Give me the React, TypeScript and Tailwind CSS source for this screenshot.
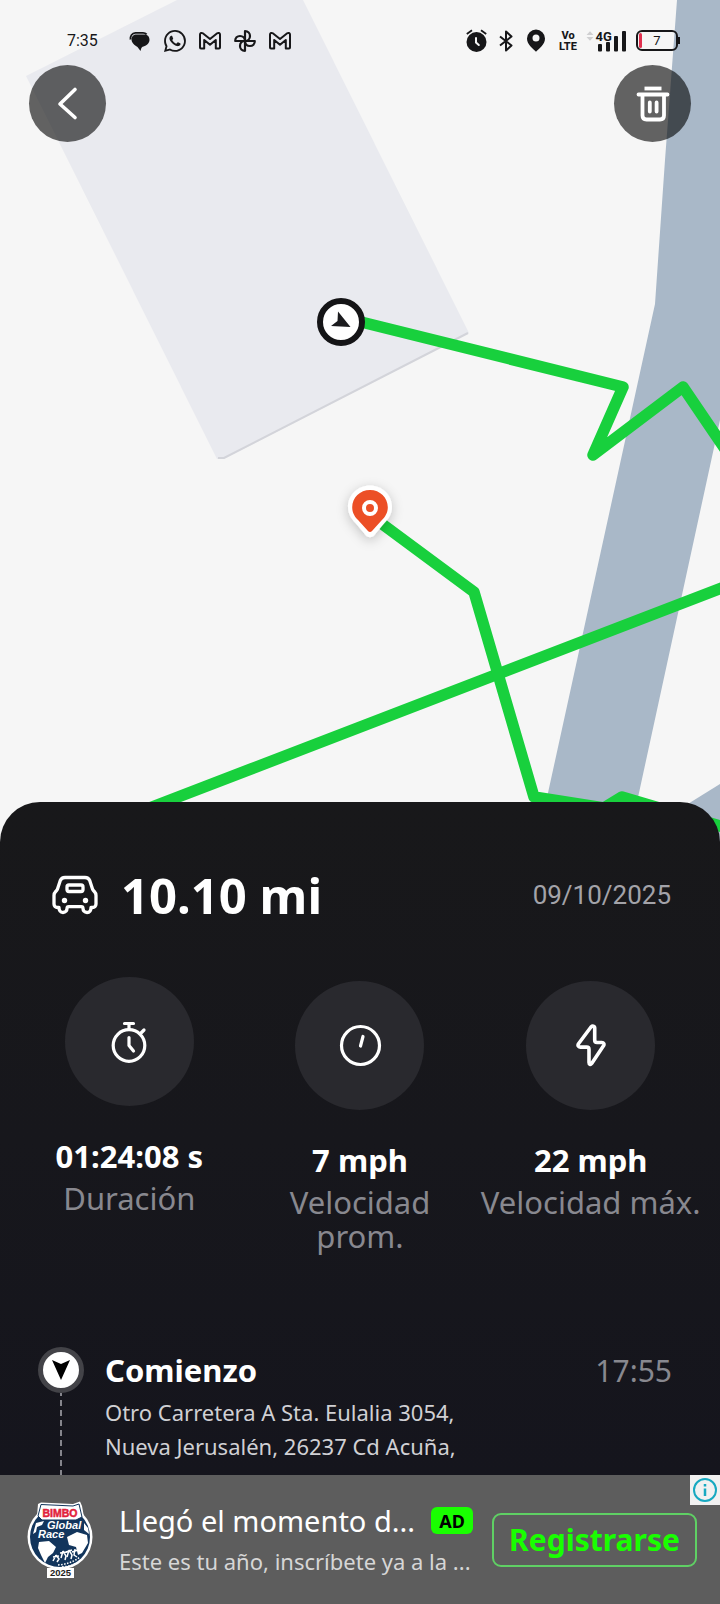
import React from "react";
import { BsWhatsapp } from "react-icons/bs";

function RouteMap() {
  return (
    <svg
      className="absolute inset-0 h-full w-full"
      viewBox="0 0 720 842"
      preserveAspectRatio="xMidYMin slice"
      role="img"
      aria-label="Mapa de la ruta"
    >
      <defs>
        <filter id="pin-shadow" x="-50%" y="-50%" width="200%" height="200%">
          <feDropShadow dx="0" dy="3" stdDeviation="6" floodColor="#000" floodOpacity="0.22" />
        </filter>
      </defs>
      <rect width="720" height="842" fill="#f6f6f6" />
      <path d="M26 76 177 0H303L469 333 224 459 217 459Z" fill="#e9eaef" />
      <path d="M468 333 224 458H218" fill="none" stroke="#d3d4da" strokeWidth="2" />
      <path d="M677 0 665 160 655 304 546 802 539 842H623L637 802 720 420V0Z" fill="#a9b8c8" />
      <path d="M691 802 720 784V842H640Z" fill="#a9b8c8" />
      <g fill="none" stroke="#18d03d" strokeWidth="11.500" strokeLinejoin="round" strokeLinecap="round">
        <path d="M341 317 623 387 593 455 683 387 740 471" />
        <path d="M740 581 100 827" />
        <path d="M370 515 474 592 534 797 604 808 622 797 730 829" />
      </g>
      <circle cx="341" cy="322" r="21" fill="#fff" stroke="#141416" strokeWidth="6" />
      <path d="M338 311.500 350.500 327 331 326 337.500 321Z" fill="#1b1b1e" />
      <g filter="url(#pin-shadow)">
        <path
          d="M370 485.500c-12.200 0-22 9.600-22 21.500 0 7 3.600 12 7.500 16l10.500 12.500c2 2.200 6 2.200 8 0L384.500 523c3.900-4 7.500-9 7.500-16 0-11.900-9.800-21.500-22-21.500Z"
          fill="#fff"
        />
        <path
          d="M370 490c-10 0-17.800 7.500-17.800 17.200 0 5.500 2.700 9.700 6.100 13.100l9.900 11c1 1.100 2.600 1.100 3.600 0l9.900-11c3.400-3.400 6.100-7.600 6.100-13.100 0-9.700-7.800-17.200-17.800-17.200Z"
          fill="#ec4f25"
        />
        <circle cx="370" cy="508" r="6" fill="none" stroke="#fff" strokeWidth="4" />
      </g>
    </svg>
  );
}

function BubbleIcon() {
  return (
    <svg viewBox="0 0 22 22" className="size-[22px]" aria-hidden="true">
      <path
        d="M7.500 4.500H16c2.500 0 4.500 2.300 4.500 5.300 0 3.200-2.500 6-6 6.600-1.300.3-2 1-2.300 2.200L11.500 21 8.500 17C5.500 15.500 2.500 12.500 2.500 9.500c0-3 2-5 5-5Z"
        fill="#171719"
      />
      <path d="M1.500 9.500C1 6 3 3 6.500 2.800H14c1.600 0 2.800.6 3.600 1.600" fill="none" stroke="#171719" strokeWidth="1.800" />
    </svg>
  );
}

function MailIcon() {
  return (
    <svg viewBox="0 0 22 22" className="size-[22px]" aria-hidden="true">
      <path
        d="M1 4.500c0-1.600 1.700-2 2.800-1.200L11 9l7.200-5.700c1.100-.8 2.800-.4 2.800 1.200V17.500c0 .6-.4 1-1 1h-3.200V10L11 14.800 5.200 10v8.500H2c-.6 0-1-.4-1-1Z"
        fill="none"
        stroke="#171719"
        strokeWidth="2"
        strokeLinejoin="round"
      />
    </svg>
  );
}

function PinwheelIcon() {
  return (
    <svg viewBox="0 0 22 22" className="size-[22px]" aria-hidden="true">
      <g fill="none" stroke="#171719" strokeWidth="2.200" strokeLinejoin="round">
        <path d="M11 11V1.200C14 1.200 16 3.200 16 6S14 11 11 11Z" />
        <path d="M11 11h9.800c0 3-2 5-4.900 5S11 14 11 11Z" />
        <path d="M11 11v9.800c-3 0-5-2-5-4.900S8 11 11 11Z" />
        <path d="M11 11H1.200C1.200 8 3.200 6 6 6s5 2 5 5Z" />
      </g>
    </svg>
  );
}

function AlarmIcon() {
  return (
    <svg viewBox="0 0 21 23" className="h-[23px] w-[21px]" aria-hidden="true">
      <circle cx="10.500" cy="13" r="10" fill="#171719" />
      <path d="M10 9v4.500l2.800 2.500" fill="none" stroke="#f6f6f6" strokeWidth="2" strokeLinecap="round" />
      <path d="M.8 5 6 1.200M20.200 5 15 1.200" stroke="#171719" strokeWidth="1.800" />
    </svg>
  );
}

function BluetoothIcon() {
  return (
    <svg viewBox="0 0 14 22" className="h-[22px] w-[14px]" aria-hidden="true">
      <path
        d="M1 6.500 12.500 15.500 7 20.500V1.500L12.500 6.500 1 15.500"
        fill="none"
        stroke="#171719"
        strokeWidth="2"
        strokeLinejoin="round"
      />
    </svg>
  );
}

function PlaceIcon() {
  return (
    <svg viewBox="0 0 18 23" className="h-[23px] w-[18px]" aria-hidden="true">
      <path
        fillRule="evenodd"
        d="M9 .5a9 9 0 0 0-9 9C0 15.500 6 19.500 9 22.800 12 19.500 18 15.500 18 9.500a9 9 0 0 0-9-9Zm0 5a3.500 3.500 0 1 1 0 7 3.500 3.500 0 0 1 0-7Z"
        fill="#171719"
      />
    </svg>
  );
}

function SignalIcon() {
  return (
    <svg viewBox="0 0 42 22" className="h-[22px] w-[42px]" role="img" aria-label="Señal 4G">
      <path d="M.5 5 4 1.200 7.500 5ZM.5 7 4 10.800 7.500 7Z" fill="#cfcfd1" />
      <g fill="#171719">
        <rect x="12" y="14" width="4" height="7.500" rx="1" />
        <rect x="20" y="12" width="4" height="9.500" rx="1" />
        <rect x="28" y="6" width="4" height="15.500" rx="1" />
        <rect x="36" y="1" width="4" height="20.500" rx="1" />
        <text x="9.500" y="10.500" fontSize="13" fontWeight="700" fontFamily="Roboto, sans-serif">
          4G
        </text>
      </g>
    </svg>
  );
}

function StatusBar() {
  return (
    <div className="flex h-[52px] items-end justify-between pr-10 pl-[67px] font-[Roboto,sans-serif] text-[#171719]">
      <div className="flex items-center">
        <span className="w-[62px] text-[16px] leading-[22px]">7:35</span>
        <div className="flex items-center gap-[13px]">
          <BubbleIcon />
          <BsWhatsapp className="size-[22px]" aria-hidden="true" />
          <MailIcon />
          <PinwheelIcon />
          <MailIcon />
        </div>
      </div>
      <div className="flex items-center">
        <AlarmIcon />
        <span className="ml-3 flex">
          <BluetoothIcon />
        </span>
        <span className="ml-[14px] flex">
          <PlaceIcon />
        </span>
        <span className="ml-[13px] flex w-5 flex-col items-center text-[11px] leading-[11px] font-extrabold">
          <span>Vo</span>
          <span>LTE</span>
        </span>
        <span className="ml-2 flex">
          <SignalIcon />
        </span>
        <span className="ml-2 flex items-center">
          <span className="flex h-[21px] w-[42px] items-center rounded-md border-2 border-[#171719] pl-px">
            <span className="h-[15px] w-[3px] rounded-sm bg-[#e0304e]" />
            <span className="flex-1 pr-1 text-center text-[13px] leading-[15px]">7</span>
          </span>
          <span className="h-[7px] w-[2px] bg-[#171719]" />
        </span>
      </div>
    </div>
  );
}

function CarIcon() {
  return (
    <svg viewBox="0 0 46 40" className="h-10 w-[46px]" fill="none" stroke="#fff" strokeWidth="3.300" strokeLinejoin="round" aria-hidden="true">
      <path d="M13 2.500H33c2.500 0 4 1.200 4.800 3.200L40.500 14c.3 1 1 1.700 1.800 2.500 1.200 1.200 1.700 2.400 1.700 4V29c0 2-1.500 3.500-3.500 3.500H39c0 3-1.300 5-4 5s-4-2-4-4c0-1-.6-1.800-1.800-1.800H16.800C15.600 31.700 15 32.500 15 33.500c0 2-1.300 4-4 4s-4-2-4-5H5.500C3.500 32.500 2 31 2 29V20.500c0-1.600.5-2.800 1.700-4C4.500 15.700 5.200 15 5.500 14L8.200 5.700C9 3.700 10.500 2.500 13 2.500Z" />
      <rect x="15" y="10" width="16" height="6.500" rx="2" />
      <circle cx="12.500" cy="25.500" r="2.700" fill="#fff" stroke="none" />
      <circle cx="33.500" cy="25.500" r="2.700" fill="#fff" stroke="none" />
    </svg>
  );
}

function StopwatchIcon() {
  return (
    <svg viewBox="0 0 44 44" className="size-11" fill="none" stroke="#fff" strokeWidth="3.200" strokeLinecap="round" strokeLinejoin="round" aria-hidden="true">
      <circle cx="22" cy="25.500" r="15.800" />
      <path d="M17.500 3.500H26.500M22 4V9M34 13 37 10M22 17.500V25.500L26.500 31" />
    </svg>
  );
}

function GaugeIcon() {
  return (
    <svg viewBox="0 0 44 44" className="size-11" fill="none" stroke="#fff" strokeWidth="3.200" strokeLinecap="round" aria-hidden="true">
      <circle cx="22.500" cy="21.500" r="19" />
      <path d="M25 12.500 22.500 22" />
    </svg>
  );
}

function BoltIcon() {
  return (
    <svg viewBox="0 0 44 44" className="size-11" fill="none" stroke="#fff" strokeWidth="3.600" strokeLinejoin="round" aria-hidden="true">
      <path d="M22 3 9.500 19.800c-1 1.600-.3 3.300 1.700 3.300h6.500c1.500 0 2.300.8 2.300 2.200V38.500c0 2 1.500 2.500 2.700 1L34.500 21.800c1-1.600.3-3.300-1.700-3.300H28c-1.500 0-2.300-.8-2.300-2.200V4c0-2-2.200-2.500-3.700-1Z" />
    </svg>
  );
}

type StatProps = { icon: React.ReactNode; value: string; label: string; lowered?: boolean };

function Stat({ icon, value, label, lowered }: StatProps) {
  return (
    <div className={lowered ? "flex flex-col items-center pt-1" : "flex flex-col items-center"}>
      <div className="flex size-[129px] items-center justify-center rounded-full bg-[#29292e]">{icon}</div>
      <p className="mt-[29px] text-[31px] leading-[42px] font-bold text-white">{value}</p>
      <p className="mt-1 text-center text-[31px] leading-[34px] text-[#88888f]">{label}</p>
    </div>
  );
}

function RaceLogo() {
  return (
    <svg viewBox="0 0 66 78" className="h-[78px] w-[66px] shrink-0" role="img" aria-label="Bimbo Global Race 2025">
      <circle cx="33" cy="36" r="32.500" fill="#fff" />
      <path d="M11 3 14 1.500 46 3 53 .5 55 5 57 16 50 20H14L10 15Z" fill="#fff" />
      <circle cx="33" cy="36" r="30" fill="#12355c" />
      <path d="M14 3.500 46 5 52 3 55 16 49 19H15L11 15Z" fill="#fff" stroke="#12355c" strokeWidth="1" />
      <rect x="15" y="7" width="36" height="10" rx="2" fill="#fff" />
      <path d="M9 22 17 20 15 24 10 26 9 31 6 33Z" fill="#fff" />
      <path d="M12 41 22 40 29 46 26 52 21 56 18 62 14 54 11 47Z" fill="#fff" />
      <path d="M40 36 50 31 60 34 61 42 55 52 51 54 49 46 42 44Z" fill="#fff" />
      <path d="M57 22 61 27 62 33 57 29Z" fill="#fff" />
      <g stroke="#fff" strokeWidth="1.500" fill="none">
        <path d="M29 54 26 60M29 54 32 58 30 61M26 56 32 55" />
        <path d="M36 50 34 57M36 50 39 55 38 59M33 52 40 51" />
        <path d="M42 49 40 56M42 49 45 54 44 58M39 51 45 49" />
        <path d="M48 48 47 54 50 56M45 51 51 49" />
        <path d="M31 64Q44 63 53 56M35 66Q46 65 51 61" strokeDasharray="1.500 1.500" />
      </g>
      <rect x="20" y="67" width="27" height="10" fill="#fff" />
      <g fontFamily="'Liberation Sans', sans-serif" fontWeight="700">
        <text x="33" y="15.500" textAnchor="middle" fontSize="10.500" fill="#e21f3c" stroke="#e21f3c" strokeWidth=".5">
          BIMBO
        </text>
        <text x="20" y="28" fontSize="11" fontStyle="italic" fill="#fff">
          Global
        </text>
        <text x="11" y="37" fontSize="11" fontStyle="italic" fill="#fff">
          Race
        </text>
        <text x="33.500" y="75" textAnchor="middle" fontSize="9.500" fill="#222">
          2025
        </text>
      </g>
    </svg>
  );
}

export default function App() {
  return (
    <div className="flex min-h-screen flex-col bg-[#15151d] font-['Noto_Sans',sans-serif]">
      <header className="relative h-[842px]">
        <RouteMap />
        <div className="relative">
          <StatusBar />
          <div className="mt-[13px] flex justify-between px-[29px]">
            <button type="button" aria-label="Volver" className="flex size-[77px] items-center justify-center rounded-full bg-black/60">
              <svg viewBox="0 0 40 40" className="size-10" fill="none" stroke="#fff" strokeWidth="3.600" strokeLinecap="round" strokeLinejoin="round" aria-hidden="true">
                <path d="M27 5.500 12 20 27 33.500" />
              </svg>
            </button>
            <button type="button" aria-label="Eliminar" className="flex size-[77px] items-center justify-center rounded-full bg-black/60">
              <svg viewBox="0 0 40 40" className="size-10" fill="none" stroke="#fff" strokeWidth="3.800" strokeLinecap="round" strokeLinejoin="round" aria-hidden="true">
                <path d="M11.500 4.500H28.500" strokeLinecap="butt" />
                <path d="M5.500 10.500H34.500M9.500 10.500V31.500c0 2.500 1.500 4 4 4H27c2.500 0 4-1.500 4-4V10.500M16.800 18.500V27.500M23.600 18.500V27.500" />
              </svg>
            </button>
          </div>
        </div>
      </header>

      <main className="relative -mt-10 flex-1 rounded-t-[40px] bg-linear-to-b from-[#18181a] via-[#17171c] to-[#15151d] pt-[61px]">
        <div className="flex items-center justify-between pr-[49px] pl-[52px]">
          <div className="flex items-center gap-[23px]">
            <CarIcon />
            <h1 className="text-[49px] leading-[64px] font-bold text-white">10.10 mi</h1>
          </div>
          <time className="font-[Roboto,sans-serif] text-[26px] leading-[60px] text-[#a3a3a9]">09/10/2025</time>
        </div>

        <section className="mt-[50px] grid grid-cols-3 px-[14px]">
          <Stat icon={<StopwatchIcon />} value="01:24:08 s" label="Duración" />
          <Stat icon={<GaugeIcon />} value="7 mph" label="Velocidad prom." lowered />
          <Stat icon={<BoltIcon />} value="22 mph" label="Velocidad máx." lowered />
        </section>

        <section className="mt-[94px] flex pr-12 pl-[38px]">
          <div className="flex w-[46px] flex-col items-center">
            <div className="flex size-[46px] items-center justify-center rounded-full border-5 border-[#434348] bg-white">
              <svg viewBox="0 0 18 20" className="h-5 w-[18px]" aria-hidden="true">
                <path d="M0 0 9 4 18 0 9 20Z" fill="#000" />
              </svg>
            </div>
            <div className="w-[2px] flex-1 bg-[repeating-linear-gradient(to_bottom,#85858c_0px,#85858c_3px,transparent_3px,transparent_7px,#85858c_7px,#85858c_10px)]" />
          </div>
          <div className="flex-1 pt-[2px] pb-3 pl-[21px]">
            <div className="flex items-baseline justify-between">
              <h2 className="text-[31px] leading-[42px] font-bold text-white">Comienzo</h2>
              <time className="text-[30px] leading-10 text-[#88888f]">17:55</time>
            </div>
            <p className="mt-1 text-[22px] leading-[34px] text-[#d0d0d4]">
              Otro Carretera A Sta. Eulalia 3054,
              <br />
              Nueva Jerusalén, 26237 Cd Acuña,
            </p>
          </div>
        </section>
      </main>

      <aside className="relative flex h-[129px] items-center bg-[#5d5d5d] pr-[23px] pl-[27px]" aria-label="Anuncio">
        <RaceLogo />
        <div className="ml-[26px] min-w-0 flex-1">
          <div className="flex items-center justify-between">
            <p className="text-[29px] leading-10 whitespace-nowrap text-white">Llegó el momento d...</p>
            <span className="flex h-[27px] w-[42px] items-center justify-center rounded-md bg-[#19ff00] text-[18px] leading-6 font-bold text-black">AD</span>
          </div>
          <p className="mt-[2px] text-[22px] leading-9 whitespace-nowrap text-[#d6d6d6]">Este es tu año, inscríbete ya a la ...</p>
        </div>
        <button type="button" className="ml-[19px] h-[54px] w-[205px] rounded-[9px] border-2 border-[#5fd064] text-[30px] leading-[42px] font-bold text-[#19ff00]">
          Registrarse
        </button>
        <button type="button" aria-label="Información del anuncio" className="absolute top-0 right-0 flex size-[30px] items-center justify-center bg-[#f1f1f1]">
          <svg viewBox="0 0 24 24" className="size-6" fill="none" stroke="#17a9c1" strokeWidth="2" aria-hidden="true">
            <circle cx="12" cy="12" r="11" />
            <path d="M12 10.500V18M12 6V8.500" strokeWidth="2.500" />
          </svg>
        </button>
      </aside>
    </div>
  );
}
